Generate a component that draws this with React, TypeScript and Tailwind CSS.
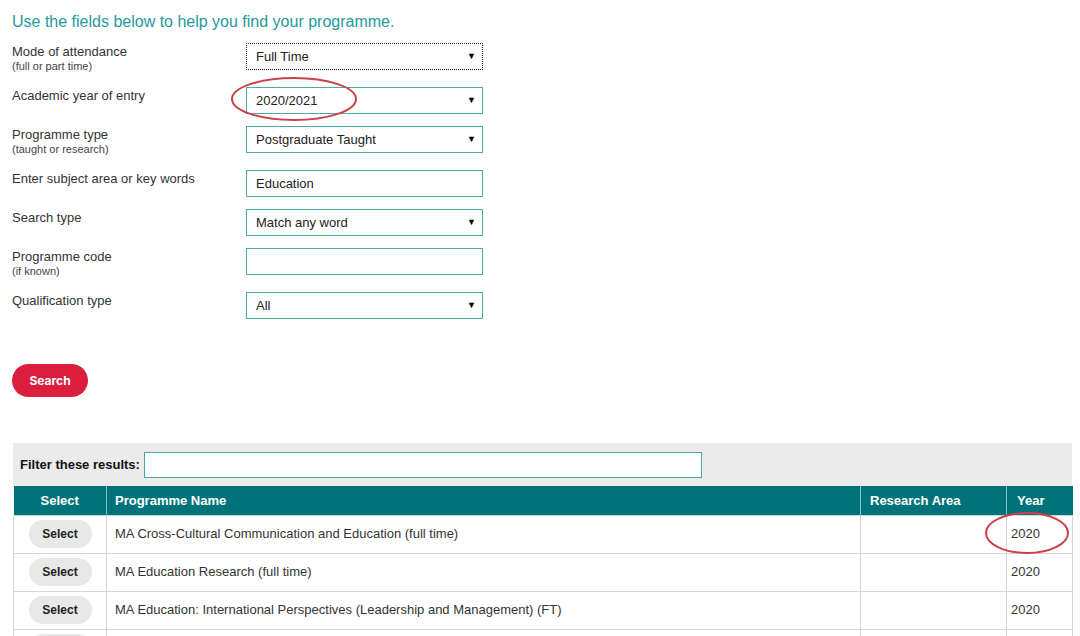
import React from "react"

const font = { fontFamily: '"Liberation Sans", Arial, sans-serif' }

type Field = {
  label: string
  sub?: string
  value: string
  kind: "select" | "input"
  focused?: boolean
}

const fields: Field[] = [
  { label: "Mode of attendance", sub: "(full or part time)", value: "Full Time", kind: "select", focused: true },
  { label: "Academic year of entry", value: "2020/2021", kind: "select" },
  { label: "Programme type", sub: "(taught or research)", value: "Postgraduate Taught", kind: "select" },
  { label: "Enter subject area or key words", value: "Education", kind: "input" },
  { label: "Search type", value: "Match any word", kind: "select" },
  { label: "Programme code", sub: "(if known)", value: "", kind: "input" },
  { label: "Qualification type", value: "All", kind: "select" },
]

// last row is only peeking in at the bottom edge
const results = [
  { name: "MA Cross-Cultural Communication and Education (full time)", area: "", year: "2020", btn: "Select" },
  { name: "MA Education Research (full time)", area: "", year: "2020", btn: "Select" },
  { name: "MA Education: International Perspectives (Leadership and Management) (FT)", area: "", year: "2020", btn: "Select" },
  { name: "", area: "", year: "", btn: "" },
]

function FormRow({ f }: { f: Field }) {
  return (
    <div className={`flex items-start ${f.sub ? "h-[44px]" : "h-[39px]"}`}>
      <div className="w-[234px] text-[13px] leading-[16px] text-[#333] pt-[1px]">
        <div>{f.label}</div>
        {f.sub && <div className="text-[11px] leading-[13px] text-[#444]">{f.sub}</div>}
      </div>
      <div
        className={`w-[237px] h-[27px] flex items-center justify-between pl-[9px] pr-[6px] text-[13px] text-[#222] bg-white ${
          f.focused ? "border border-dotted border-[#222]" : "border border-[#4fa8a8]"
        }`}
      >
        <span>{f.value}</span>
        {f.kind === "select" && <span className="text-[9px] text-black">▼</span>}
      </div>
    </div>
  )
}

export default function App() {
  return (
    <div className="relative w-[1080px] h-[636px] overflow-hidden bg-white" style={font}>
      <div className="px-3 pt-[12px]">
        <h2 className="text-[16px] leading-[20px] text-[#1f9a9b] mb-[11px]">
          Use the fields below to help you find your programme.
        </h2>
        <div className="flex flex-col">
          {fields.map((f) => (
            <FormRow key={f.label} f={f} />
          ))}
        </div>
        <button
          className="mt-[33px] w-[76px] h-[33px] rounded-full bg-[#dc1e3e] text-white text-[12px] font-bold"
          style={{ fontFamily: 'Inter, "Liberation Sans", sans-serif' }}
        >
          Search
        </button>
      </div>

      <div className="ml-[13px] mt-[46px] w-[1059px]">
        <div className="bg-[#ebebeb] h-[43px] flex items-center pl-[7px]">
          <span className="text-[13px] font-bold text-[#111] mr-[4px]">Filter these results:</span>
          <div className="w-[558px] h-[26px] bg-white border border-[#4fa8a8]" />
        </div>
        <table className="w-full border-collapse text-[13px] text-[#333] table-fixed">
          <colgroup>
            <col className="w-[93px]" />
            <col className="w-[754px]" />
            <col className="w-[146px]" />
            <col className="w-[66px]" />
          </colgroup>
          <thead>
            <tr className="bg-[#00737a] h-[29px] text-white font-bold text-left">
              <th className="text-center border-r border-[#7fc4c6]">Select</th>
              <th className="pl-[8px] text-left border-r border-[#7fc4c6]">Programme Name</th>
              <th className="pl-[9px] text-left border-r border-[#7fc4c6]">Research Area</th>
              <th className="pl-[10px] text-left">Year</th>
            </tr>
          </thead>
          <tbody>
            {results.map((r, i) => (
              <tr key={i} className="h-[38px]">
                <td className="border border-[#d6d6d6] text-center">
                  <button className="w-[63px] h-[28px] rounded-full bg-[#e8e8e8] text-[12px] font-bold text-[#222] align-middle">
                    {r.btn}
                  </button>
                </td>
                <td className="border border-[#d6d6d6] pl-[8px]">{r.name}</td>
                <td className="border border-[#d6d6d6]">{r.area}</td>
                <td className="border border-[#d6d6d6] pl-[4px]">{r.year}</td>
              </tr>
            ))}
          </tbody>
        </table>
      </div>

      {/* red hand-drawn annotation rings */}
      <svg className="absolute left-[230px] top-[76px] pointer-events-none" width="132" height="48">
        <ellipse cx="64" cy="23" rx="62" ry="21" fill="none" stroke="#cc4049" strokeWidth="2" />
      </svg>
      <svg className="absolute left-[983px] top-[511px] pointer-events-none" width="90" height="46">
        <ellipse cx="44" cy="22" rx="41" ry="20" fill="none" stroke="#cc4049" strokeWidth="2" />
      </svg>
    </div>
  )
}
